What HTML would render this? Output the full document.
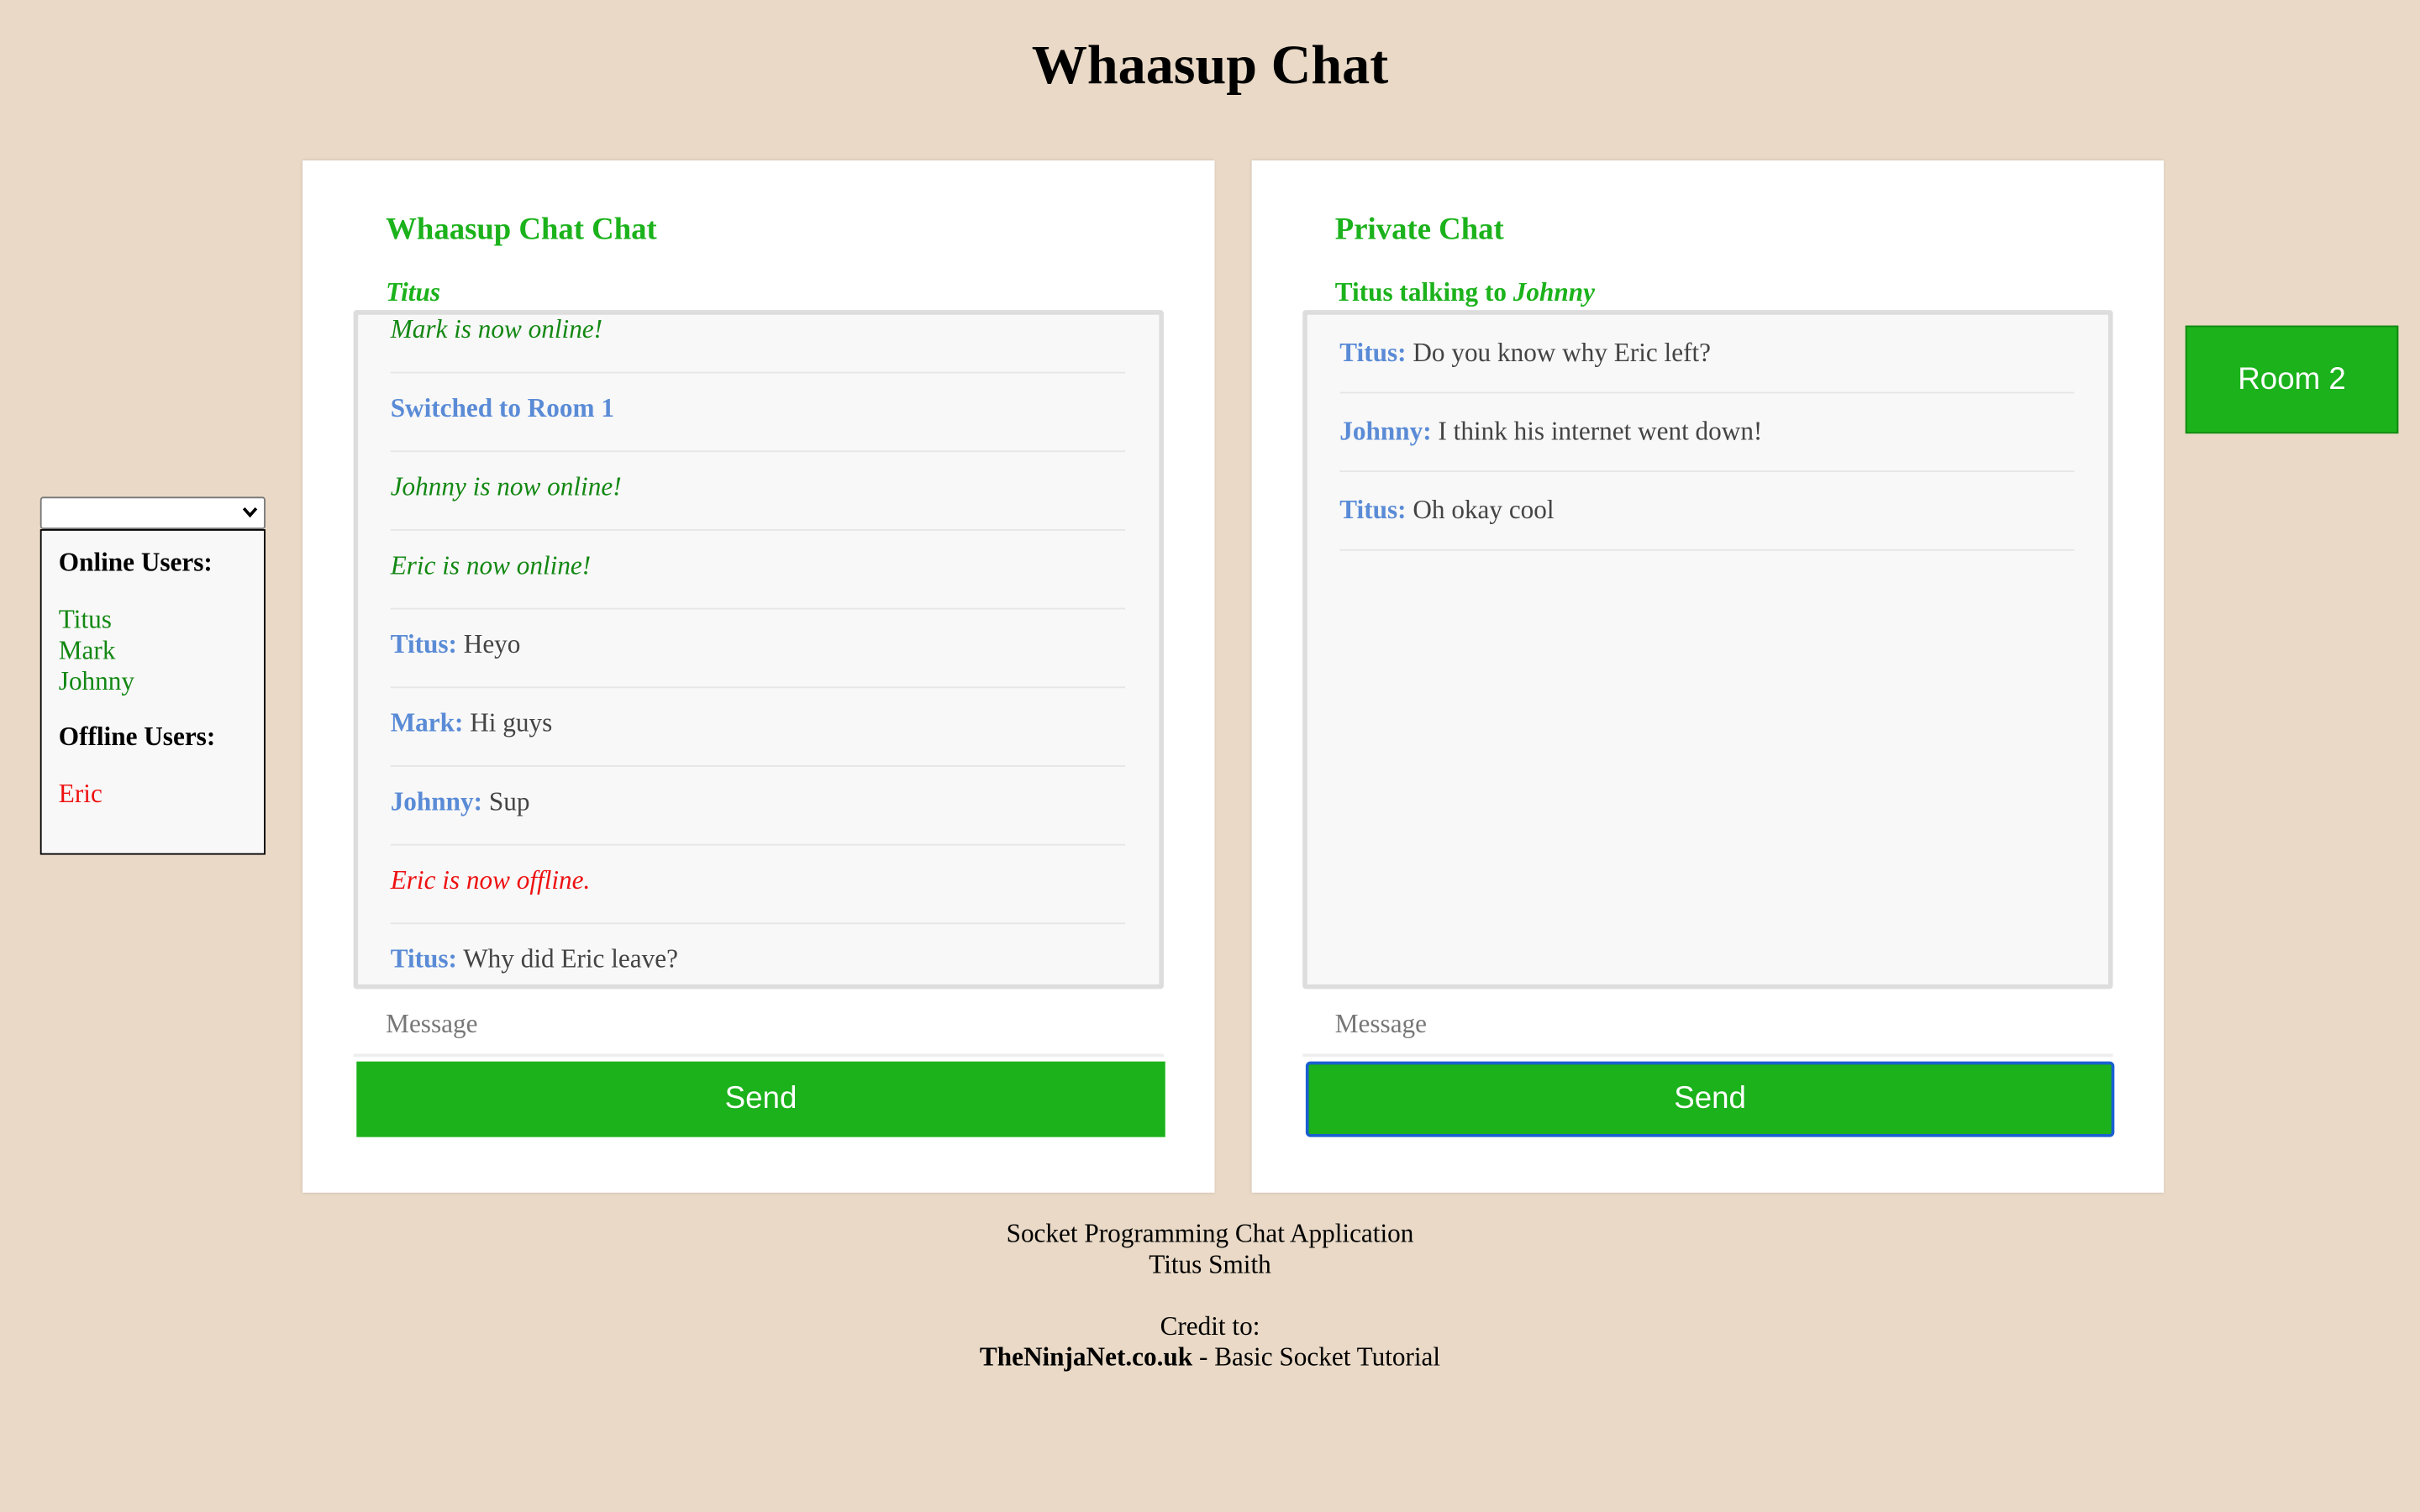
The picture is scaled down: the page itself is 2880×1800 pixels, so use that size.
<!DOCTYPE html>
<html><head><meta charset="utf-8"><style>
html,body{margin:0;padding:0;width:2880px;height:1800px;overflow:hidden;background:#e9d9c6}
#w{position:absolute;left:0;top:0;width:1568px;height:980px;transform:scale(1.836735);transform-origin:0 0;font-family:"Liberation Serif",serif;color:#000}
.a{position:absolute}
h1{position:absolute;left:0;width:1568px;top:20px;margin:0;text-align:center;font-size:36px;line-height:44px;font-weight:bold}
.panel{position:absolute;top:104px;width:591px;height:669px;background:#fff;box-shadow:0 0 2px rgba(0,0,0,.15)}
.h{position:absolute;left:54px;top:33px;color:#1bb21b;font-weight:bold;font-size:20px;line-height:24px}
.sub{position:absolute;left:54px;top:76px;color:#1bb21b;font-weight:bold;font-size:17px;line-height:20px}
.box{position:absolute;left:33px;top:97px;width:519px;height:434px;border:3px solid #ddd;border-radius:2px;background:#f8f8f8;overflow:hidden}
.item{position:absolute;left:21px;width:476px;height:50px;border-bottom:1px solid #e6e6e6;font-size:17px;line-height:20px;color:#444}
.n{color:#5a8bd6;font-weight:bold}
.g{color:#138813;font-style:italic}
.r{color:#ee1111;font-style:italic}
.msg{position:absolute;left:33px;top:541px;width:525px;height:38px;border-bottom:2px solid #eee;font-size:17px;color:#777}
.msg span{position:absolute;left:21px;top:9px}
.send{position:absolute;left:35px;top:584px;width:524px;height:49px;background:#1bb21b;color:#fff;font-family:"Liberation Sans",sans-serif;font-size:20px;line-height:49px;text-align:center}
</style></head><body><div id="w">
<h1>Whaasup Chat</h1>

<div class="a" style="left:26px;top:322px;width:144px;height:19px;border:1px solid #777;border-radius:2px;background:#fff"><svg class="a" style="right:4px;top:5px" width="10" height="8" viewBox="0 0 10 8"><path d="M1 1.5 L5 6 L9 1.5" fill="none" stroke="#000" stroke-width="2"/></svg></div>
<div class="a" style="left:26px;top:343px;width:144px;height:209px;border:1px solid #000;background:#f8f8f8;font-size:17px;line-height:20px">
<div class="a" style="left:11px;top:11px;font-weight:bold">Online Users:</div>
<div class="a" style="left:11px;top:48px;color:#138813">Titus<br>Mark<br>Johnny</div>
<div class="a" style="left:11px;top:124px;font-weight:bold">Offline Users:</div>
<div class="a" style="left:11px;top:161px;color:#ee1111">Eric</div>
</div>

<div class="panel" style="left:196px">
<div class="h">Whaasup Chat Chat</div>
<div class="sub"><i>Titus</i></div>
<div class="box">
<div class="item" style="top:-13px"><div class="a" style="top:13px"><span class="g">Mark is now online!</span></div></div>
<div class="item" style="top:38px"><div class="a" style="top:13px"><span class="n">Switched to Room 1</span></div></div>
<div class="item" style="top:89px"><div class="a" style="top:13px"><span class="g">Johnny is now online!</span></div></div>
<div class="item" style="top:140px"><div class="a" style="top:13px"><span class="g">Eric is now online!</span></div></div>
<div class="item" style="top:191px"><div class="a" style="top:13px"><span class="n">Titus:</span> Heyo</div></div>
<div class="item" style="top:242px"><div class="a" style="top:13px"><span class="n">Mark:</span> Hi guys</div></div>
<div class="item" style="top:293px"><div class="a" style="top:13px"><span class="n">Johnny:</span> Sup</div></div>
<div class="item" style="top:344px"><div class="a" style="top:13px"><span class="r">Eric is now offline.</span></div></div>
<div class="item" style="top:395px"><div class="a" style="top:13px"><span class="n">Titus:</span> Why did Eric leave?</div></div>
</div>
<div class="msg"><span>Message</span></div>
<div class="send">Send</div>
</div>

<div class="panel" style="left:811px">
<div class="h">Private Chat</div>
<div class="sub">Titus talking to <i>Johnny</i></div>
<div class="box">
<div class="item" style="top:0px"><div class="a" style="top:15px"><span class="n">Titus:</span> Do you know why Eric left?</div></div>
<div class="item" style="top:51px"><div class="a" style="top:15px"><span class="n">Johnny:</span> I think his internet went down!</div></div>
<div class="item" style="top:102px"><div class="a" style="top:15px"><span class="n">Titus:</span> Oh okay cool</div></div>
</div>
<div class="msg"><span>Message</span></div>
<div class="send" style="box-sizing:border-box;border:2px solid #1a5fcf;border-radius:3px;line-height:45px">Send</div>
</div>

<div class="a" style="left:1416px;top:211px;width:136px;height:68px;background:#1bb21b;border:1px solid #138813;color:#fff;font-family:'Liberation Sans',sans-serif;font-size:20px;line-height:68px;text-align:center">Room 2</div>

<div class="a" style="left:0;width:1568px;top:790px;text-align:center;font-size:17px;line-height:20px">Socket Programming Chat Application<br>Titus Smith<br><br>Credit to:<br><b>TheNinjaNet.co.uk</b> - Basic Socket Tutorial</div>
</div></body></html>
